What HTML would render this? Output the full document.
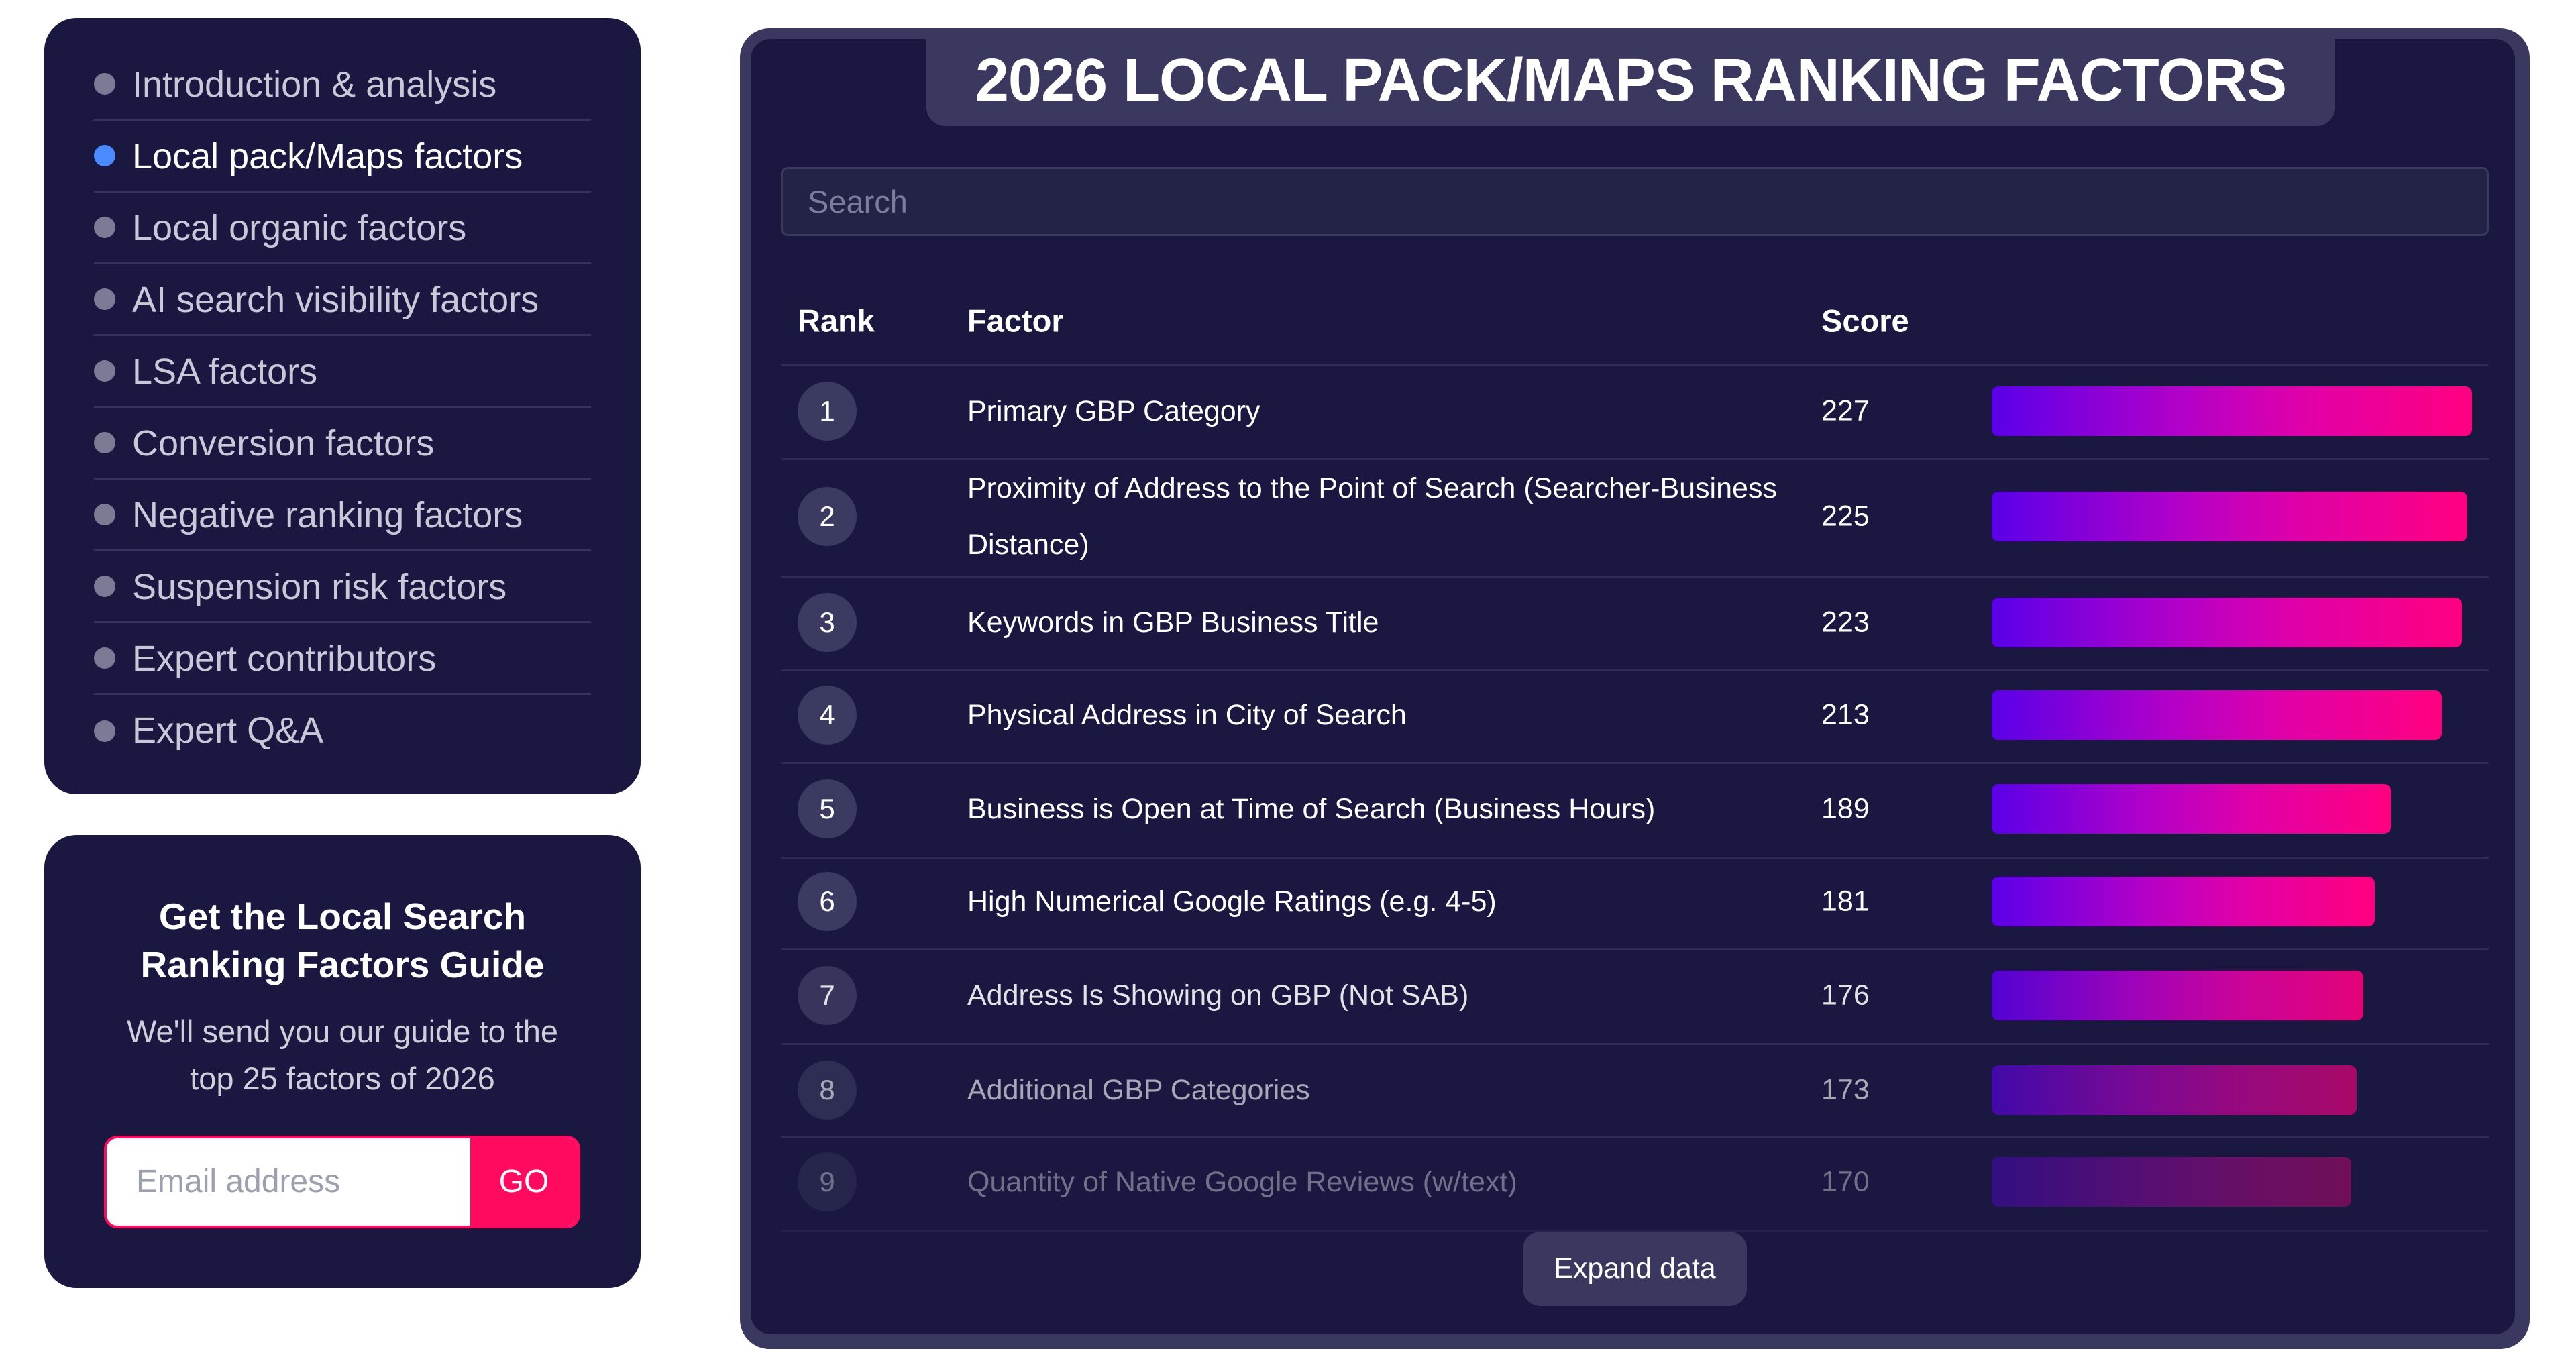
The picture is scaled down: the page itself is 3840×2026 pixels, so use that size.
<!DOCTYPE html>
<html><head><meta charset="utf-8">
<style>
*{margin:0;padding:0;box-sizing:border-box}
html,body{width:3840px;height:2026px;background:#fff;overflow:hidden;font-family:"Liberation Sans",sans-serif}
.card{position:absolute;background:#1a1840;border-radius:48px}
.nav{left:66px;top:27px;width:889px;height:1157px}
.nav .item{position:absolute;left:74px;width:741px;height:107px;border-bottom:3px solid #35345a;}
.nav .dot{position:absolute;left:0;top:50%;margin-top:-16px;width:32px;height:32px;border-radius:50%;background:#7c7b96}
.nav .txt{position:absolute;left:57px;top:0;line-height:107px;font-size:54px;color:#c9c8d8;white-space:nowrap}
.nav .act .dot{background:#4a8bff}
.nav .act .txt{color:#fff}
.guide{left:66px;top:1245px;width:889px;height:675px;text-align:center;color:#fff}
.guide h2{position:absolute;left:0;right:0;top:85px;font-size:55px;font-weight:bold;line-height:72px}
.guide p{position:absolute;left:0;right:0;top:258px;font-size:47px;line-height:70px;color:#cfcfdc}
.email{position:absolute;left:89px;top:448px;width:710px;height:138px;border:4px solid #ff0a5e;border-radius:20px;background:#fff;overflow:hidden}
.email span{position:absolute;left:44px;top:0;line-height:130px;font-size:48px;color:#9aa0ae}
.email b{position:absolute;right:0;top:0;width:160px;height:130px;background:#ff0a5e;color:#fff;line-height:130px;font-size:48px;font-weight:normal;text-align:center}
.panel{position:absolute;left:1103px;top:42px;width:2668px;height:1969px;background:#3b3860;border-radius:44px}
.inner{position:absolute;left:16px;top:16px;right:22px;bottom:22px;background:#1a1840;border-radius:30px}
.tab{position:absolute;left:1381px;top:58px;width:2100px;height:130px;background:#3b3860;border-radius:0 0 28px 28px;color:#fff;font-weight:bold;font-size:90px;text-align:center;line-height:124px;white-space:nowrap;letter-spacing:-1px}
.search{position:absolute;left:1164px;top:249px;width:2546px;height:103px;background:#232348;border:3px solid #3a3a5e;border-radius:10px;font-size:47px;color:#7c7c9a;line-height:97px;padding-left:37px}
.h{position:absolute;top:478px;font-size:47px;font-weight:bold;color:#fff;transform:translateY(-50%)}
.sep{position:absolute;left:1164px;width:2546px;height:3px;background:#2e2d55}
.row{position:absolute;left:0;width:3840px}
.circ{position:absolute;left:1189px;width:88px;height:88px;margin-top:-44px;border-radius:50%;background:#3b3a60;color:#fff;font-size:42px;text-align:center;line-height:88px}
.f{position:absolute;left:1442px;font-size:43px;color:#fff;transform:translateY(-50%);line-height:84px;width:1260px}
.s{position:absolute;left:2715px;font-size:43px;color:#fff;transform:translateY(-50%)}
.bar{position:absolute;left:2969px;height:74px;margin-top:-37px;border-radius:10px;background:linear-gradient(90deg,#5a00e8 0%,#b400c8 40%,#e000a8 65%,#ff0080 100%)}
.btn{position:absolute;left:2270px;top:1836px;width:334px;height:111px;background:#3b3860;border-radius:26px;color:#fff;font-size:43px;text-align:center;line-height:111px}
</style></head><body>
<div class="card nav">
  <div class="item" style="top:46px"><div class="dot"></div><div class="txt">Introduction &amp; analysis</div></div>
  <div class="item act" style="top:153px"><div class="dot"></div><div class="txt">Local pack/Maps factors</div></div>
  <div class="item" style="top:260px"><div class="dot"></div><div class="txt">Local organic factors</div></div>
  <div class="item" style="top:367px"><div class="dot"></div><div class="txt">AI search visibility factors</div></div>
  <div class="item" style="top:474px"><div class="dot"></div><div class="txt">LSA factors</div></div>
  <div class="item" style="top:581px"><div class="dot"></div><div class="txt">Conversion factors</div></div>
  <div class="item" style="top:688px"><div class="dot"></div><div class="txt">Negative ranking factors</div></div>
  <div class="item" style="top:795px"><div class="dot"></div><div class="txt">Suspension risk factors</div></div>
  <div class="item" style="top:902px"><div class="dot"></div><div class="txt">Expert contributors</div></div>
  <div class="item" style="top:1009px;border-bottom:none"><div class="dot"></div><div class="txt">Expert Q&amp;A</div></div>
</div>
<div class="card guide">
  <h2>Get the Local Search<br>Ranking Factors Guide</h2>
  <p>We'll send you our guide to the<br>top 25 factors of 2026</p>
  <div class="email"><span>Email address</span><b>GO</b></div>
</div>
<div class="panel"><div class="inner"></div></div>
<div class="tab">2026 LOCAL PACK/MAPS RANKING FACTORS</div>
<div class="search">Search</div>
<div class="h" style="left:1189px">Rank</div>
<div class="h" style="left:1442px">Factor</div>
<div class="h" style="left:2715px">Score</div>
<div class="sep" style="top:543px"></div>
<div class="sep" style="top:683px"></div>
<div class="sep" style="top:858px"></div>
<div class="sep" style="top:998px"></div>
<div class="sep" style="top:1136px"></div>
<div class="sep" style="top:1277px"></div>
<div class="sep" style="top:1414px"></div>
<div class="sep" style="top:1555px"></div>
<div class="sep" style="top:1693px"></div>
<div class="sep" style="top:1833px;opacity:.5"></div>

<div class="row" style="top:613px"><div class="circ">1</div><div class="f">Primary GBP Category</div><div class="s">227</div><div class="bar" style="width:716px"></div></div>
<div class="row" style="top:770px"><div class="circ">2</div><div class="f">Proximity of Address to the Point of Search (Searcher-Business Distance)</div><div class="s">225</div><div class="bar" style="width:709px"></div></div>
<div class="row" style="top:928px"><div class="circ">3</div><div class="f">Keywords in GBP Business Title</div><div class="s">223</div><div class="bar" style="width:701px"></div></div>
<div class="row" style="top:1066px"><div class="circ">4</div><div class="f">Physical Address in City of Search</div><div class="s">213</div><div class="bar" style="width:671px"></div></div>
<div class="row" style="top:1206px"><div class="circ">5</div><div class="f">Business is Open at Time of Search (Business Hours)</div><div class="s">189</div><div class="bar" style="width:595px"></div></div>
<div class="row" style="top:1344px"><div class="circ">6</div><div class="f">High Numerical Google Ratings (e.g. 4-5)</div><div class="s">181</div><div class="bar" style="width:571px"></div></div>
<div class="row" style="top:1484px;opacity:.88"><div class="circ">7</div><div class="f">Address Is Showing on GBP (Not SAB)</div><div class="s">176</div><div class="bar" style="width:554px"></div></div>
<div class="row" style="top:1625px;opacity:.62"><div class="circ">8</div><div class="f">Additional GBP Categories</div><div class="s">173</div><div class="bar" style="width:544px"></div></div>
<div class="row" style="top:1762px;opacity:.38"><div class="circ">9</div><div class="f">Quantity of Native Google Reviews (w/text)</div><div class="s">170</div><div class="bar" style="width:536px"></div></div>
<div class="btn">Expand data</div>
</body></html>
